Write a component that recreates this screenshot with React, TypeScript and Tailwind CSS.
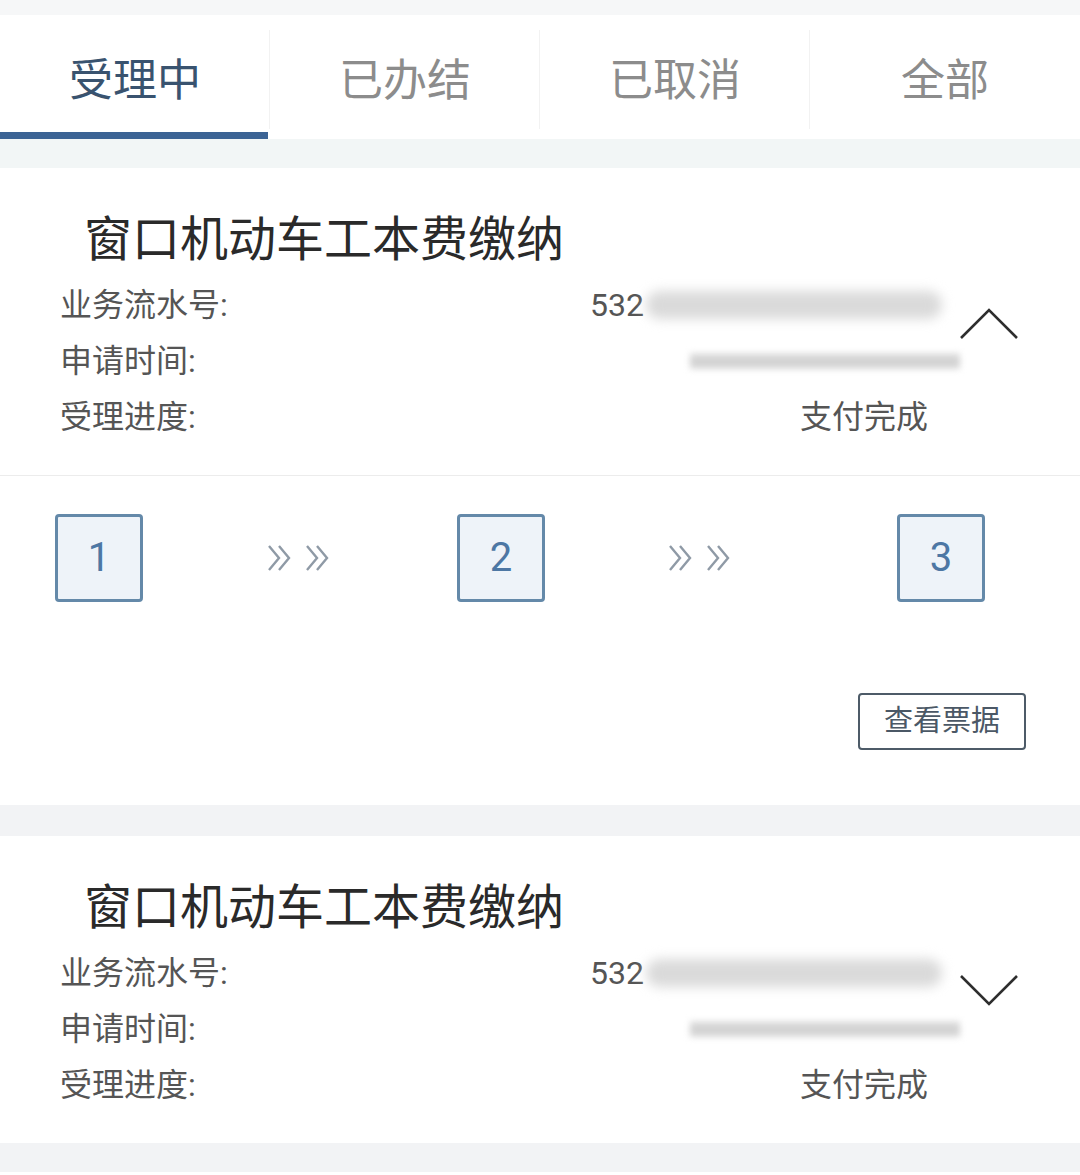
import React from "react";

const tabs = ["受理中", "已办结", "已取消", "全部"];

const ChevronUp = () => (
  <svg width="60" height="34" viewBox="0 0 60 34" fill="none">
    <path d="M2 32 L30 4 L58 32" stroke="#2e2e2e" strokeWidth="2.6" />
  </svg>
);

const ChevronDown = () => (
  <svg width="60" height="34" viewBox="0 0 60 34" fill="none">
    <path d="M2 2 L30 30 L58 2" stroke="#2e2e2e" strokeWidth="2.6" />
  </svg>
);

const Arrows = () => (
  <svg width="64" height="28" viewBox="0 0 64 28" fill="none" stroke="#8f9aa6" strokeWidth="2.4">
    <path d="M1 2 L11 14 L1 26" />
    <path d="M11 2 L21 14 L11 26" />
    <path d="M39 2 L49 14 L39 26" />
    <path d="M49 2 L59 14 L49 26" />
  </svg>
);

const Step = ({ n }: { n: number }) => (
  <div className="w-[88px] h-[88px] shrink-0 rounded-[4px] border-[3px] border-[#6489a9] bg-[#eef3f9] flex items-center justify-center text-[40px] text-[#4d77a4]">
    {n}
  </div>
);

const Header = ({ open }: { open: boolean }) => (
  <div className="relative h-[307px] pt-[43px]">
    <div className="pl-[84px] text-[48px] leading-[58px] text-[#2a2a2a]">窗口机动车工本费缴纳</div>
    <div className="mt-[8px] pl-[60px] text-[32px] leading-[56px] text-[#555]">
      <div className="flex">
        <span className="w-[530px]">业务流水号:</span>
        <span className="flex items-center">
          532
          <span className="ml-[2px] w-[296px] h-[28px] bg-[#dadada] blur-[6px] rounded-full" />
        </span>
      </div>
      <div className="flex">
        <span className="w-[530px]">申请时间:</span>
        <span className="flex items-center ml-[100px]">
          <span className="w-[270px] h-[16px] blur-[3px] bg-gradient-to-b from-[#e4e4e4] via-[#cfcfcf] to-[#dcdcdc]" />
        </span>
      </div>
      <div className="flex">
        <span className="w-[530px]">受理进度:</span>
        <span className="ml-[210px]">支付完成</span>
      </div>
    </div>
    <div className="absolute right-[61px] top-[138px]">{open ? <ChevronUp /> : <ChevronDown />}</div>
  </div>
);

export default function App() {
  return (
    <div
      className="w-[1080px] min-h-[1175px] bg-white"
      style={{ fontFamily: 'Roboto, "Noto Sans CJK SC", sans-serif' }}
    >
      <div className="h-[15px] bg-[#f6f7f8]" />
      <div className="flex h-[124px] bg-white">
        {tabs.map((t, i) => (
          <div key={t} className="relative flex-1 flex items-center justify-center">
            <span className={`text-[44px] pt-[8px] ${i === 0 ? "text-[#39536f]" : "text-[#8c8c8c]"}`}>{t}</span>
            {i === 0 && <div className="absolute left-0 right-[2px] bottom-0 h-[7px] bg-[#3b6394]" />}
            {i < 3 && <div className="absolute right-0 top-[15px] bottom-[10px] w-px bg-[#f2f2f2]" />}
          </div>
        ))}
      </div>
      <div className="h-[29px] bg-[#f2f6f6]" />

      <div className="bg-white">
        <Header open />
        <div className="h-px bg-[#ececec]" />
        <div className="flex items-center pl-[55px] pt-[38px]">
          <Step n={1} />
          <div className="ml-[125px]"><Arrows /></div>
          <div className="ml-[125px]"><Step n={2} /></div>
          <div className="ml-[124px]"><Arrows /></div>
          <div className="ml-[164px]"><Step n={3} /></div>
        </div>
        <div className="flex justify-end pr-[54px] pt-[91px] pb-[55px]">
          <button className="w-[168px] h-[57px] rounded-[4px] border-2 border-[#4d5b68] text-[29px] text-[#4b5866] bg-white">
            查看票据
          </button>
        </div>
      </div>

      <div className="h-[31px] bg-[#f2f3f5]" />

      <div className="bg-white">
        <Header open={false} />
      </div>

      <div className="h-[29px] bg-[#f2f3f5]" />
    </div>
  );
}
